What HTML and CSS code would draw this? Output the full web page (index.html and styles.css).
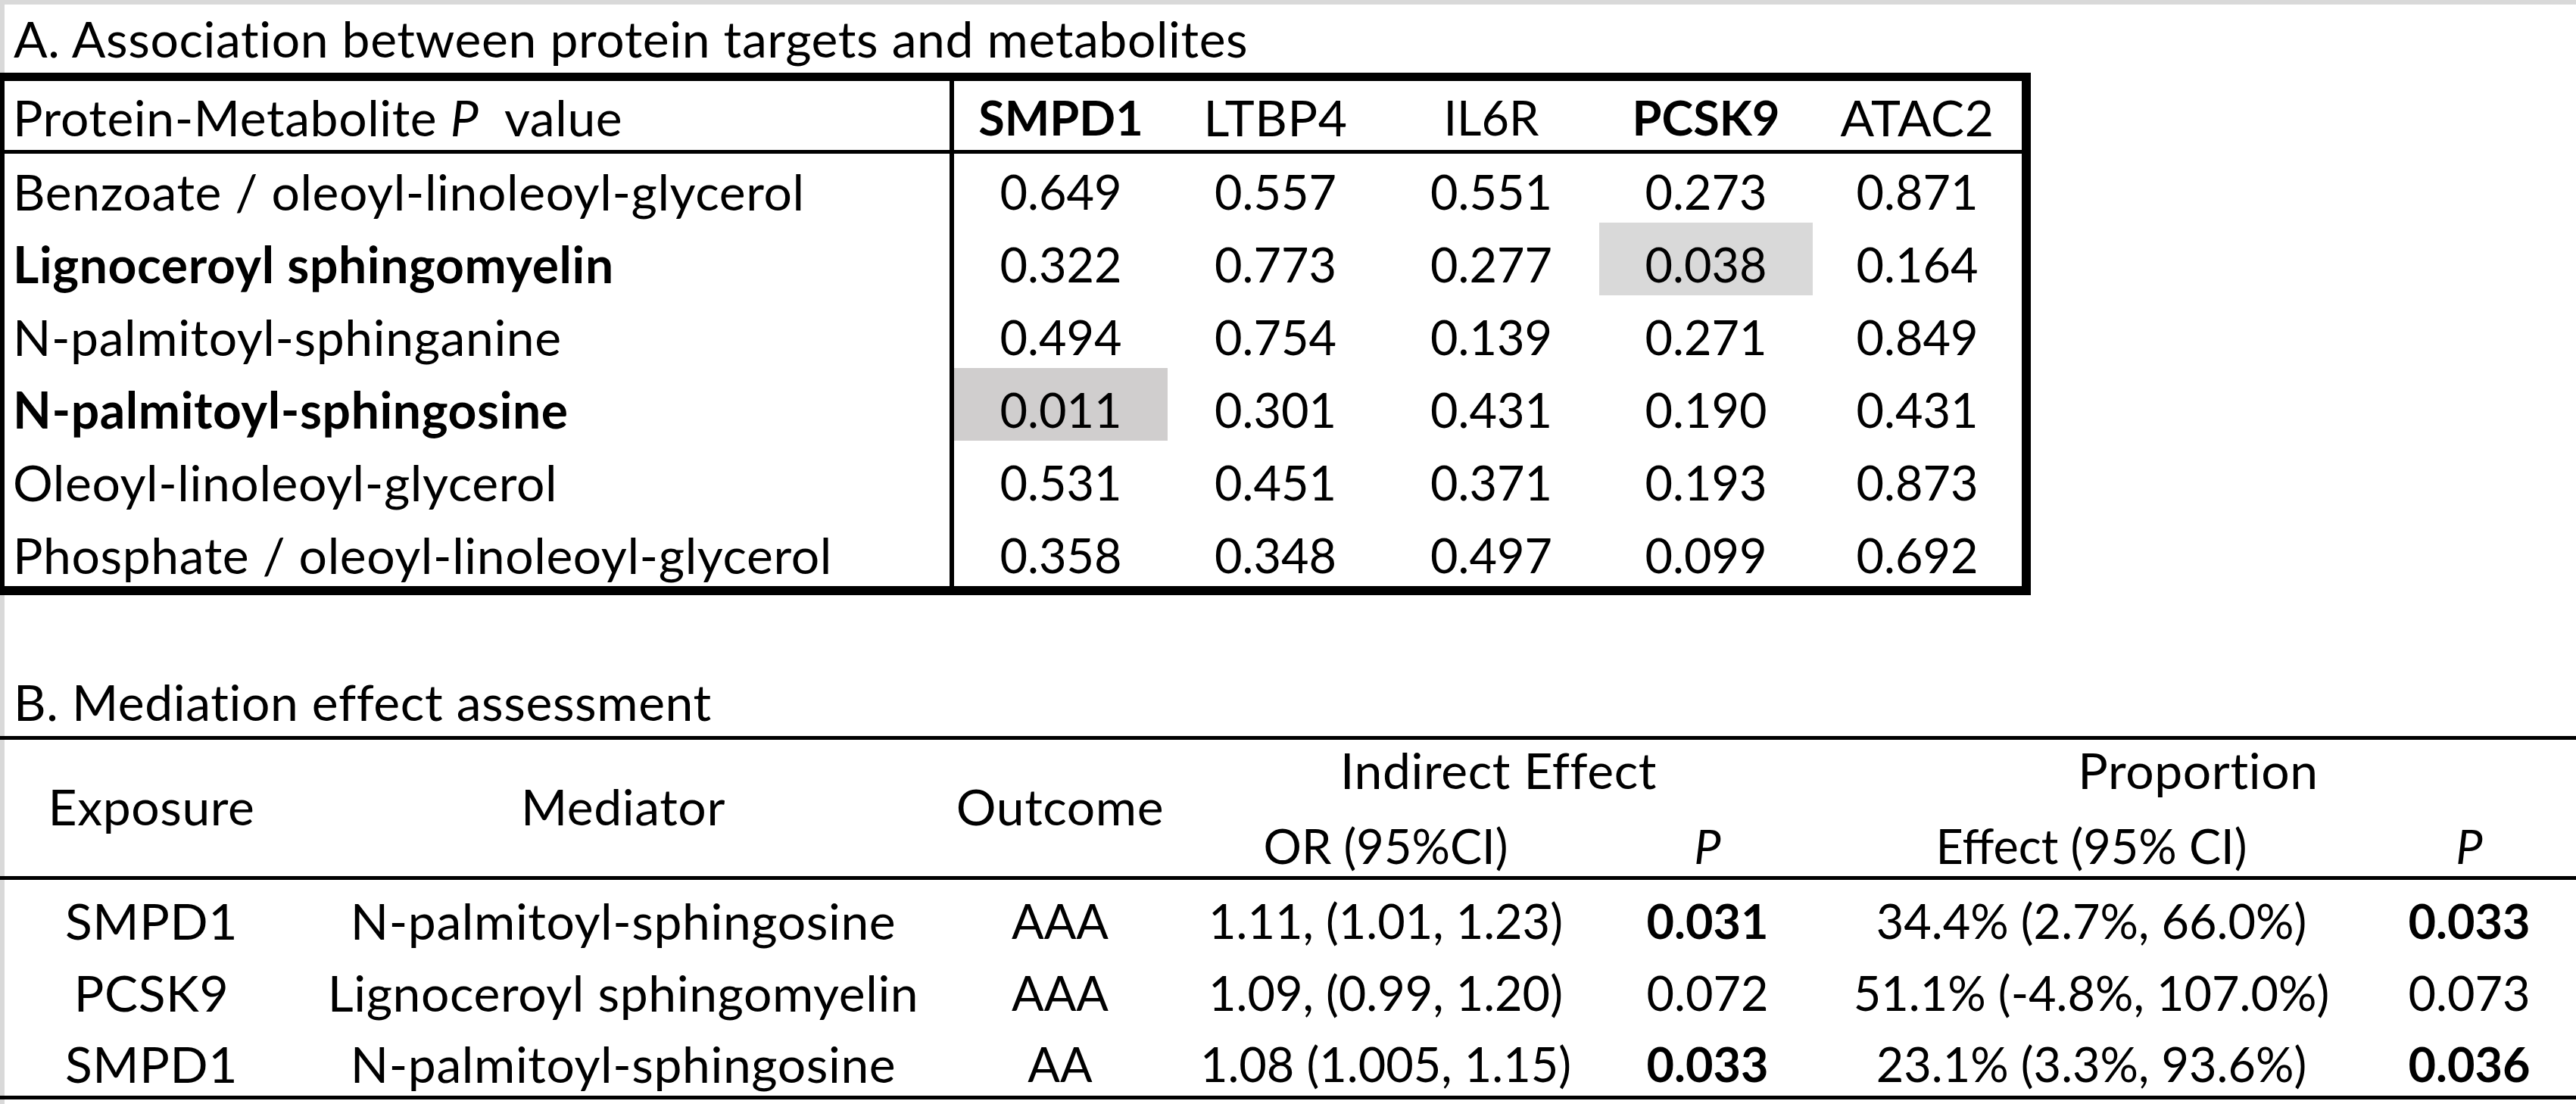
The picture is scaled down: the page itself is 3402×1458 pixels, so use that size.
FILE: index.html
```html
<!DOCTYPE html>
<html lang="en">
<head>
<meta charset="utf-8">
<title>Protein targets, metabolites and mediation</title>
<link rel="stylesheet" href="styles.css">
</head>
<body>
<div class="page">
  <h2 class="title">A. Association between protein targets and metabolites</h2>
  <div class="assoc">
    <div class="row head">
      <div class="cell name t">Protein-Metabolite <i>P</i>&nbsp; value</div>
      <div class="cell b">SMPD1</div>
      <div class="cell t">LTBP4</div>
      <div class="cell">IL6R</div>
      <div class="cell b">PCSK9</div>
      <div class="cell t">ATAC2</div>
    </div>
    <div class="row first">
      <div class="cell name t">Benzoate / oleoyl-linoleoyl-glycerol</div>
      <div class="cell">0.649</div>
      <div class="cell">0.557</div>
      <div class="cell">0.551</div>
      <div class="cell">0.273</div>
      <div class="cell">0.871</div>
    </div>
    <div class="row">
      <div class="cell name t b">Lignoceroyl sphingomyelin</div>
      <div class="cell">0.322</div>
      <div class="cell">0.773</div>
      <div class="cell">0.277</div>
      <div class="cell hl">0.038</div>
      <div class="cell">0.164</div>
    </div>
    <div class="row">
      <div class="cell name t">N-palmitoyl-sphinganine</div>
      <div class="cell">0.494</div>
      <div class="cell">0.754</div>
      <div class="cell">0.139</div>
      <div class="cell">0.271</div>
      <div class="cell">0.849</div>
    </div>
    <div class="row">
      <div class="cell name t b">N-palmitoyl-sphingosine</div>
      <div class="cell hl-dark">0.011</div>
      <div class="cell">0.301</div>
      <div class="cell">0.431</div>
      <div class="cell">0.190</div>
      <div class="cell">0.431</div>
    </div>
    <div class="row">
      <div class="cell name t">Oleoyl-linoleoyl-glycerol</div>
      <div class="cell">0.531</div>
      <div class="cell">0.451</div>
      <div class="cell">0.371</div>
      <div class="cell">0.193</div>
      <div class="cell">0.873</div>
    </div>
    <div class="row">
      <div class="cell name t">Phosphate / oleoyl-linoleoyl-glycerol</div>
      <div class="cell">0.358</div>
      <div class="cell">0.348</div>
      <div class="cell">0.497</div>
      <div class="cell">0.099</div>
      <div class="cell">0.692</div>
    </div>
  </div>

  <h2 class="title title-b">B. Mediation effect assessment</h2>
  <div class="med">
    <div class="cell span2 t">Exposure</div>
    <div class="cell span2 t">Mediator</div>
    <div class="cell span2 t">Outcome</div>
    <div class="cell group t">Indirect Effect</div>
    <div class="cell group t">Proportion</div>
    <div class="cell sub">OR (95%CI)</div>
    <div class="cell sub"><i>P</i></div>
    <div class="cell sub">Effect (95% CI)</div>
    <div class="cell sub"><i>P</i></div>

    <div class="cell data t">SMPD1</div>
    <div class="cell data t">N-palmitoyl-sphingosine</div>
    <div class="cell data">AAA</div>
    <div class="cell data">1.11, (1.01, 1.23)</div>
    <div class="cell data b">0.031</div>
    <div class="cell data">34.4% (2.7%, 66.0%)</div>
    <div class="cell data b">0.033</div>

    <div class="cell data t">PCSK9</div>
    <div class="cell data t">Lignoceroyl sphingomyelin</div>
    <div class="cell data">AAA</div>
    <div class="cell data">1.09, (0.99, 1.20)</div>
    <div class="cell data">0.072</div>
    <div class="cell data">51.1% (-4.8%, 107.0%)</div>
    <div class="cell data">0.073</div>

    <div class="cell data last t">SMPD1</div>
    <div class="cell data last t">N-palmitoyl-sphingosine</div>
    <div class="cell data last">AA</div>
    <div class="cell data last">1.08 (1.005, 1.15)</div>
    <div class="cell data last b">0.033</div>
    <div class="cell data last">23.1% (3.3%, 93.6%)</div>
    <div class="cell data last b">0.036</div>
  </div>
</div>
</body>
</html>
```

FILE: styles.css
```css
html, body {
  margin: 0;
  padding: 0;
  background: #ffffff;
}

.page {
  width: 3402px;
  height: 1458px;
  box-sizing: border-box;
  padding-top: 6px;
  overflow: hidden;
  color: #000000;
  font-family: Lato, "Open Sans", "Liberation Sans", sans-serif;
  background:
    linear-gradient(#d9d9d9, #d9d9d9) left top / 6px 100% no-repeat,
    linear-gradient(#d9d9d9, #d9d9d9) left top / 100% 6px no-repeat,
    #ffffff;
}

.title {
  margin: 0;
  height: 90px;
  box-sizing: border-box;
  padding: 2px 0 0 18px;
  font-size: 66px;
  letter-spacing: 0.6px;
  line-height: 86px;
  font-weight: 400;
  white-space: nowrap;
}

.title-b {
  margin-top: 96px;
}

.b {
  font-weight: 700;
}

.t {
  font-size: 66px;
  letter-spacing: 0.6px;
}

/* ---------- Table A ---------- */
.assoc {
  display: grid;
  width: max-content;
  grid-template-columns: 1254px 282px 285px 285px 282px 276px;
  grid-template-rows: 96px 91px repeat(5, 96px);
  border-style: solid;
  border-color: #000000;
  border-width: 11px 12px 12px 6px;
  font-size: 63px;
  line-height: 76px;
}

.assoc .row {
  display: contents;
}

.assoc .cell {
  box-sizing: border-box;
  padding-top: 17px;
  text-align: center;
  white-space: nowrap;
}

.assoc .name {
  text-align: left;
  padding-left: 11px;
  border-right: 6px solid #000000;
}

.assoc .head .cell {
  padding-top: 10px;
  border-bottom: 5px solid #000000;
}

.assoc .first .cell {
  padding-top: 12px;
}

.hl {
  background: #d9d9d9;
}

.hl-dark {
  background: #d0cece;
}

/* ---------- Table B ---------- */
.med {
  display: grid;
  grid-template-columns: 400px 846px 308px 552px 298px 716px 282px;
  grid-template-rows: 90px 95px repeat(3, 95px);
  border-top: 5px solid #000000;
  border-bottom: 5px solid #000000;
  font-size: 63px;
  line-height: 76px;
}

.med .cell {
  box-sizing: border-box;
  text-align: center;
  white-space: nowrap;
}

.med .span2 {
  grid-row: span 2;
  padding-top: 50px;
  border-bottom: 5px solid #000000;
}

.med .group {
  grid-column: span 2;
  padding-top: 2px;
}

.med .sub {
  padding-top: 12px;
  border-bottom: 5px solid #000000;
}

.med .data {
  padding-top: 16px;
}

.med .last {
  padding-top: 15px;
}
```
